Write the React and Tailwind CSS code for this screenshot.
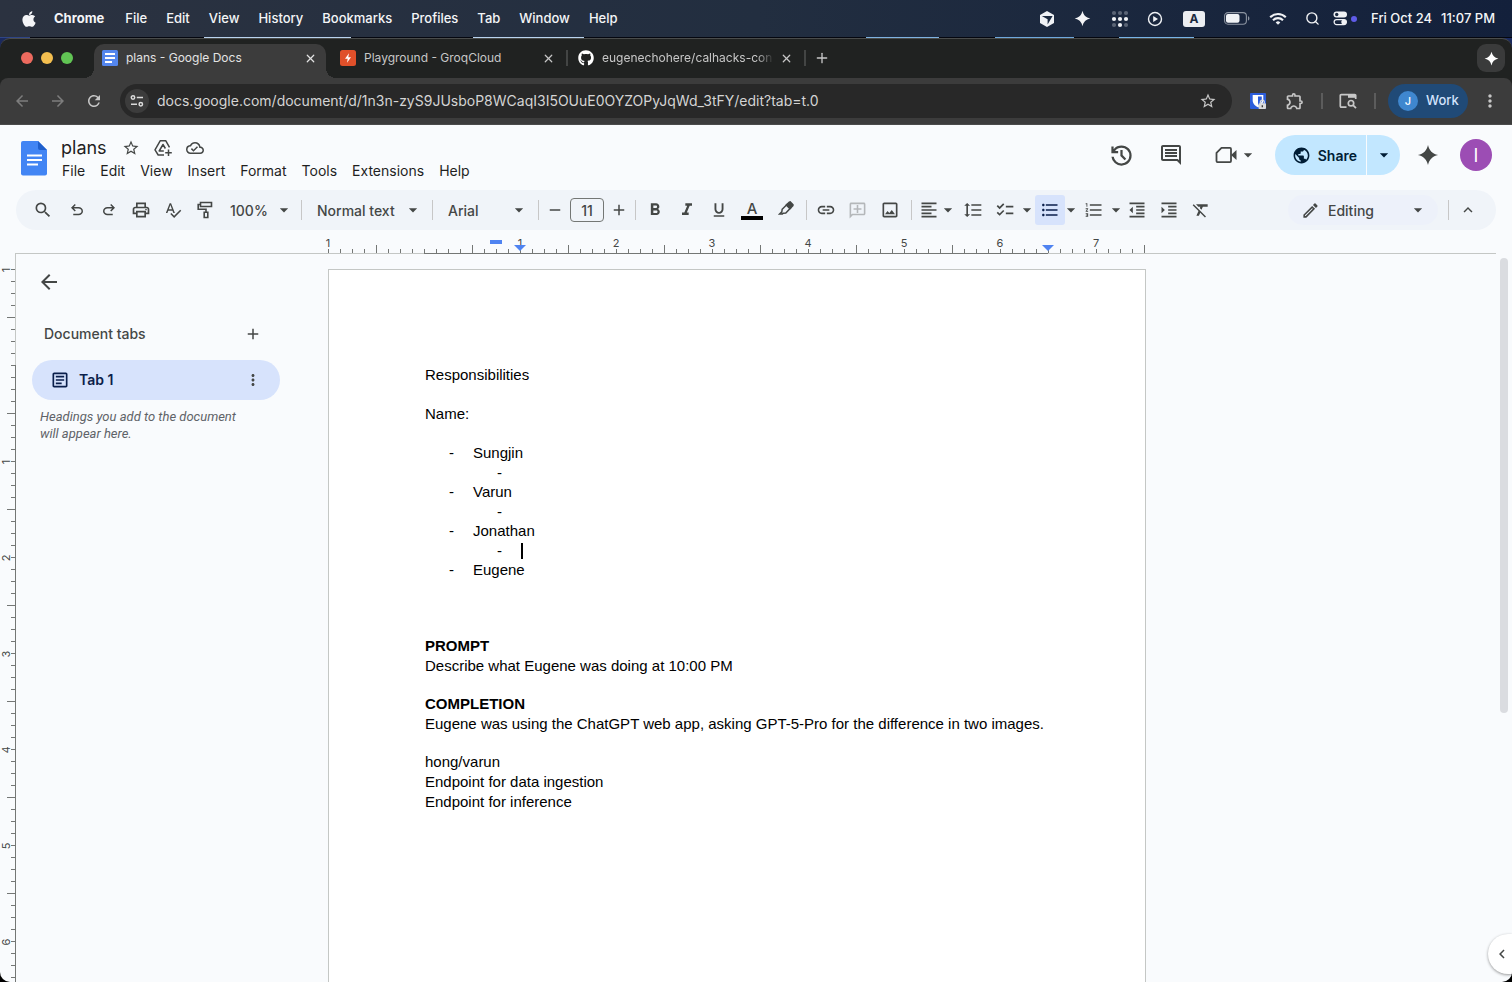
import React from "react";
import {
  MdSearch, MdOutlinePrint, MdSpellcheck, MdArrowDropDown, MdRemove, MdAdd,
  MdFormatBold, MdFormatItalic, MdFormatUnderlined, MdLink, MdOutlineAddComment, MdOutlineImage,
  MdFormatAlignLeft, MdFormatLineSpacing, MdChecklist, MdFormatListBulleted, MdFormatListNumbered,
  MdFormatIndentDecrease, MdFormatIndentIncrease, MdFormatClear, MdOutlineModeEdit, MdKeyboardArrowUp,
  MdStarBorder, MdOutlineCloudDone, MdOutlineComment, MdPublic,
  MdArrowBack, MdArrowForward, MdRefresh, MdMoreVert, MdOutlineArticle, MdChevronLeft, MdOutlineExtension,
} from "react-icons/md";
import { FaApple, FaGithub } from "react-icons/fa";
import { X, Plus, Search } from "lucide-react";

const Symbol = ({ d, size = 20, className = "" }) => (
  <svg viewBox="0 -960 960 960" width={size} height={size} fill="currentColor" className={className}><path d={d} /></svg>
);

const UNDO = "M280-200v-80h284q63 0 109.5-40T720-420q0-60-46.5-100T564-560H312l104 104-56 56-200-200 200-200 56 56-104 104h252q97 0 166.5 63T800-420q0 94-69.5 157T564-200H280Z";
const REDO = "M396-200q-97 0-166.5-63T160-420q0-94 69.5-157T396-640h252L544-744l56-56 200 200-200 200-56-56 104-104H396q-63 0-109.5 40T240-420q0 60 46.5 100T396-280h284v80H396Z";
const HISTORY = "M480-120q-138 0-240.5-91.5T122-440h82q14 104 92.5 172T480-200q117 0 198.5-81.5T760-480q0-117-81.5-198.5T480-760q-69 0-129 32t-101 88h110v80H120v-240h80v94q51-64 124.5-99T480-840q75 0 140.5 28.5t114 77q48.5 48.5 77 114T840-480q0 75-28.5 140.5t-77 114q-48.5 48.5-114 77T480-120Zm112-192L440-464v-216h80v184l128 128-56 56Z";

const Spark = ({ size = 20, className = "" }) => (
  <svg viewBox="0 0 24 24" width={size} height={size} fill="currentColor" className={className}>
    <path d="M12 1C13.4 7.200 16.800 10.600 23 12C16.800 13.400 13.400 16.800 12 23C10.600 16.800 7.200 13.400 1 12C7.200 10.600 10.600 7.200 12 1Z" />
  </svg>
);

const DriveAdd = () => (
  <svg viewBox="0 0 20 20" width="20" height="20" fill="none" stroke="currentColor" strokeWidth="1.500" strokeLinejoin="round">
    <path d="M11 17H5.200L2 11.800 7.300 2.700h5.400l3.800 6.600" />
    <path d="M10.800 13H6.200L10 6.500l2.400 4" />
    <path d="M15.500 11.500v6.500M12.200 14.800h6.600" />
  </svg>
);

const PaintRoller = () => (
  <svg viewBox="0 0 20 20" width="20" height="20" fill="none" stroke="currentColor" strokeWidth="1.600">
    <path d="M5.500 2.500h11v4h-11zM5.500 4.500H3.200v4.700h7.800v3M9.200 12.200h3.600v5.300H9.200z" />
  </svg>
);

const Highlighter = () => (
  <svg viewBox="0 0 20 20" width="20" height="20" fill="none" stroke="currentColor" strokeWidth="1.500">
    <path d="M6.200 9.200l5-5 3.600 3.600-5 5.200-2.700.2-.8.900H3.600l2.200-2.200z" />
    <path d="M10.300 5.100l3-3 .9-.2 2.800 2.800-.1.900-3 3z" fill="currentColor" />
  </svg>
);

const VideoCam = () => (
  <svg viewBox="0 0 24 24" width="24" height="24">
    <path d="M7.500 4.900H16a1 1 0 0 1 1 1v12.200a1 1 0 0 1-1 1H3.500a1 1 0 0 1-1-1V9.900z" fill="none" stroke="currentColor" strokeWidth="1.800" strokeLinejoin="round" />
    <path d="M17 12l5.500-5v10z" fill="currentColor" />
  </svg>
);

const DocsFavicon = () => (
  <svg viewBox="0 0 16 16" width="16" height="16" className="shrink-0">
    <rect width="16" height="16" rx="1.500" fill="#5486ee" />
    <path d="M3 4h10M3 8h10M3 12h7" stroke="#fff" strokeWidth="1.800" />
  </svg>
);

const GroqFavicon = () => (
  <svg viewBox="0 0 16 16" width="16" height="16" className="shrink-0">
    <rect width="16" height="16" rx="2.500" fill="#e0502a" />
    <path d="M9 3.300L5 8.800h2.700L7 12.700l4-5.500H8.300z" fill="#fff" />
  </svg>
);

const DocsLogo = () => (
  <svg viewBox="0 0 26 35" width="26" height="35" className="shrink-0">
    <path d="M2 0h15l9 9v23.500a2 2 0 0 1-2 2H2a2 2 0 0 1-2-2V2a2 2 0 0 1 2-2z" fill="#4285f4" />
    <path d="M17 0l9 9h-7a2 2 0 0 1-2-2z" fill="#1f5fcc" />
    <path d="M6 14.500h15M6 19h15M6 23.500h11" stroke="#fff" strokeWidth="1.800" />
  </svg>
);

const CubeIcon = () => (
  <svg viewBox="0 0 16 18" width="16" height="18">
    <path d="M8 1l7 4v8l-7 4-7-4V5z" fill="#f0f2f5" />
    <path d="M2.800 6h10.800L8.600 14.500V9.300z" fill="#1c2a40" />
  </svg>
);

const DotsIcon = () => (
  <svg viewBox="0 0 18 18" width="18" height="18" fill="#f0f2f5">
    {[[3, 3, .3], [9, 3, .3], [15, 3, .3], [3, 9, 1], [9, 9, 1], [15, 9, 1], [3, 15, .3], [9, 15, 1], [15, 15, .3]].map(([x, y, o], i) => (
      <circle key={i} cx={x} cy={y} r="2.100" opacity={o} />
    ))}
  </svg>
);

const PlayIcon = () => (
  <svg viewBox="0 0 16 16" width="16" height="16">
    <circle cx="8" cy="8" r="6.500" fill="none" stroke="#f0f2f5" strokeWidth="1.400" />
    <path d="M6.200 5.100L11 8l-4.800 2.900z" fill="#f0f2f5" />
  </svg>
);

const BatteryIcon = () => (
  <svg viewBox="0 0 26 13" width="26" height="13">
    <rect x=".6" y=".6" width="21.800" height="11.600" rx="3.400" fill="none" stroke="#8c94a1" strokeWidth="1.100" />
    <rect x="2" y="2" width="13.500" height="8.800" rx="2" fill="#f0f2f5" />
    <path d="M24 4.300c1 .4 1.400 1.200 1.400 2.100s-.4 1.700-1.400 2.100z" fill="#8c94a1" />
  </svg>
);

const WifiIcon = () => (
  <svg viewBox="0 0 18 14" width="18" height="14" fill="none" stroke="#f0f2f5" strokeWidth="2.100">
    <path d="M1.200 5.200a11 11 0 0 1 15.600 0M4 8.200a7.100 7.100 0 0 1 10 0" />
    <path d="M9 12.800l-2.300-2.400a3.300 3.300 0 0 1 4.600 0z" fill="#f0f2f5" stroke="none" />
  </svg>
);

const ControlIcon = () => (
  <svg viewBox="0 0 15 15" width="15" height="15">
    <rect x=".5" y=".5" width="13.500" height="6" rx="3" fill="#f0f2f5" />
    <circle cx="3.700" cy="3.500" r="1.700" fill="#1c2a40" />
    <rect x="1.100" y="8.600" width="12.300" height="5" rx="2.500" fill="none" stroke="#f0f2f5" strokeWidth="1.200" />
    <circle cx="10.800" cy="11.100" r="2.500" fill="#f0f2f5" />
  </svg>
);

const TuneIcon = () => (
  <svg viewBox="0 0 14 14" width="14" height="14" fill="none" stroke="#dcdcdc" strokeWidth="1.500">
    <circle cx="3" cy="3.500" r="1.700" /><path d="M6.800 3.500H13M1 10.200h6" /><circle cx="10.800" cy="10.200" r="1.700" />
  </svg>
);

const ShieldIcon = () => (
  <svg viewBox="0 0 16 16" width="16" height="16">
    <rect width="16" height="16" rx="1" fill="#2c5ddb" />
    <path d="M2.700 2h10.600v5.500c0 3.500-2.800 5.600-5.300 6.700C5.500 13 2.700 11 2.700 7.500z" fill="#fff" />
    <path d="M8 3.500h3.800v4c0 2.200-1.800 3.800-3.800 4.800z" fill="#2c5ddb" />
    <rect x="8.500" y="10.200" width="7.500" height="5.800" rx="1" fill="#dcdcdc" />
    <path d="M10.300 10.500V9.200a2 2 0 0 1 4 0v1.300" fill="none" stroke="#dcdcdc" strokeWidth="1.200" />
    <path d="M12.300 12.200v2" stroke="#333" strokeWidth="1.300" />
  </svg>
);

const TabSearchIcon = () => (
  <svg viewBox="0 0 18 16" width="18" height="16" fill="none" stroke="#c7c7c7" strokeWidth="1.700">
    <path d="M7.500 14.100H2.300a1 1 0 0 1-1-1V2.600a1 1 0 0 1 1-1h13.400a1 1 0 0 1 1 1V6" />
    <path d="M9 1.500h7.500v3.300H9z" fill="#c7c7c7" stroke="none" />
    <circle cx="12" cy="10.200" r="2.700" /><path d="M14 12.200l3 3" />
  </svg>
);

function MenuBar() {
  const items = ["File", "Edit", "View", "History", "Bookmarks", "Profiles", "Tab", "Window", "Help"];
  return (
    <header className="flex h-[37px] shrink-0 items-center bg-linear-to-r from-[#2b3240] via-[#222e40] to-[#13203b] pr-[17px] pl-5 text-[13px] font-medium text-[#f4f5f7]">
      <FaApple size={18} className="mr-4" />
      <nav aria-label="Application menu" className="flex items-center gap-[19px]">
        <button className="mr-[2px] font-bold">Chrome</button>
        {items.map((t) => <button key={t}>{t}</button>)}
      </nav>
      <div className="ml-auto flex items-center">
        <span className="mr-[19px]"><CubeIcon /></span>
        <Spark size={17} className="mr-5" />
        <span className="mr-[18px]"><DotsIcon /></span>
        <span className="mr-5"><PlayIcon /></span>
        <span className="mr-[19px] flex h-4 w-[22px] items-center justify-center rounded-[3px] bg-[#eceef1] text-[12px] font-bold text-[#1c2a40]">A</span>
        <span className="mr-[19px]"><BatteryIcon /></span>
        <span className="mr-[18px]"><WifiIcon /></span>
        <Search size={15} strokeWidth={2.200} className="mr-[13px]" />
        <ControlIcon />
        <span className="mr-[14px] ml-[3px] size-[6px] rounded-full bg-[#5f5ce8]" />
        <time className="flex gap-[9px]"><span>Fri Oct 24</span><span>11:07 PM</span></time>
      </div>
    </header>
  );
}

function BrowserTab({ icon, title, active, fade }) {
  return (
    <div className={"relative flex h-[34px] w-[232px] items-center gap-2 px-2 pb-[6px] text-[12px] " + (active ? "rounded-t-[10px] bg-[#3c3c3c] text-[#e3e3e3]" : "text-[#c7c7c7]")}>
      {active && <span className="absolute bottom-0 -left-[10px] size-[10px] bg-[radial-gradient(circle_at_0_0,transparent_10px,#3c3c3c_10px)]" />}
      {active && <span className="absolute -right-[10px] bottom-0 size-[10px] bg-[radial-gradient(circle_at_100%_0,transparent_10px,#3c3c3c_10px)]" />}
      {icon}
      <span className={"min-w-0 flex-1 overflow-hidden whitespace-nowrap " + (fade ? "-mr-1 mask-r-from-90% mask-r-to-100%" : "")}>{title}</span>
      <button aria-label={"Close " + title} className="flex size-4 shrink-0 items-center justify-center"><X size={13} strokeWidth={2.200} /></button>
    </div>
  );
}

const TabDivider = () => (
  <div className="flex h-[34px] w-[6px] items-center justify-center pb-[6px]"><span className="h-4 w-[2px] bg-[#434544]" /></div>
);

function TabStrip() {
  return (
    <div className="flex h-10 items-end rounded-t-[10px] border-t border-[#4a4c4b] bg-[#202221] pr-[7px] pl-[21px]">
      <div className="mr-[21px] flex h-10 items-center gap-2">
        <button aria-label="Close window" className="size-3 rounded-full bg-[#ec6a5e]" />
        <button aria-label="Minimize window" className="size-3 rounded-full bg-[#f4bf4f]" />
        <button aria-label="Zoom window" className="size-3 rounded-full bg-[#61c554]" />
      </div>
      <BrowserTab active icon={<DocsFavicon />} title="plans - Google Docs" />
      <div className="w-[6px]" />
      <BrowserTab icon={<GroqFavicon />} title="Playground - GroqCloud" />
      <TabDivider />
      <BrowserTab fade icon={<FaGithub size={16} className="shrink-0 text-white" />} title="eugenechohere/calhacks-con" />
      <TabDivider />
      <button aria-label="New tab" className="ml-[6px] flex h-[34px] items-center pb-[6px] text-[#c7c7c7]"><Plus size={16} /></button>
      <button aria-label="Assistant" className="mb-[6px] ml-auto flex size-7 items-center justify-center rounded-[9px] bg-[#3a3b3b] text-white"><Spark size={15} /></button>
    </div>
  );
}

function AddressBar() {
  return (
    <div className="bg-[#202221]">
      <div className="flex h-[47px] items-center rounded-t-lg border-b border-[#4b4b4b] bg-[#3c3c3c] pr-3 pl-[13px] text-[#c7c7c7]">
        <button aria-label="Back" className="mr-[18px] text-[#7d7d7d]"><MdArrowBack size={18} /></button>
        <button aria-label="Forward" className="mr-[18px] text-[#7d7d7d]"><MdArrowForward size={18} /></button>
        <button aria-label="Reload" className="mr-[17px]"><MdRefresh size={18} /></button>
        <div className="flex h-[34px] flex-1 items-center rounded-full bg-[#282828] pr-[15px] pl-[5px]">
          <button aria-label="Site information" className="mr-2 flex size-6 items-center justify-center rounded-full bg-[#3c3c3c]"><TuneIcon /></button>
          <div className="flex min-w-0 flex-1">
            <input aria-label="Address" className="w-full bg-transparent text-[14px] leading-5 text-[#d4d4d4] outline-none" defaultValue="docs.google.com/document/d/1n3n-zyS9JUsboP8WCaqI3I5OUuE0OYZOPyJqWd_3tFY/edit?tab=t.0" />
          </div>
          <button aria-label="Bookmark this tab"><MdStarBorder size={18} /></button>
        </div>
        <button aria-label="Password manager" className="ml-[18px]"><ShieldIcon /></button>
        <button aria-label="Extensions" className="ml-[19px]"><MdOutlineExtension size={20} /></button>
        <span className="mr-4 ml-4 h-4 w-[2px] bg-[#5c5c5c]" />
        <button aria-label="Search tabs"><TabSearchIcon /></button>
        <span className="mr-3 ml-[17px] h-4 w-[2px] bg-[#5c5c5c]" />
        <button className="mr-3 flex h-[34px] w-20 items-center gap-2 rounded-full bg-[#204a77] pl-[10px] text-[13px] font-medium text-[#d3e3fd]">
          <span className="flex size-5 items-center justify-center rounded-full bg-[#3f87cf] text-[11px] text-white">J</span>Work
        </button>
        <button aria-label="Browser menu"><MdMoreVert size={20} /></button>
      </div>
    </div>
  );
}

function DocsHeader() {
  const menus = ["File", "Edit", "View", "Insert", "Format", "Tools", "Extensions", "Help"];
  return (
    <div className="flex h-[65px] items-start pr-5 pl-[21px] text-[#444746]">
      <a href="#home" aria-label="Docs home" className="mt-4 mr-[14px]"><DocsLogo /></a>
      <div className="mt-3">
        <div className="flex h-[22px] items-center">
          <input aria-label="Document name" defaultValue="plans" className="mr-[13px] h-[22px] w-[48px] bg-transparent pb-[2px] text-[18px] text-[#1f1f1f] outline-none" />
          <button aria-label="Star" className="mr-[13px]"><MdStarBorder size={18} /></button>
          <button aria-label="Add to Drive" className="mr-[13px]"><DriveAdd /></button>
          <button aria-label="Saved to Drive"><MdOutlineCloudDone size={18} /></button>
        </div>
        <nav aria-label="Document menu" className="flex h-[22px] items-center gap-[15px] pl-px text-[14px] text-[#1f1f1f]">
          {menus.map((m) => <button key={m}>{m}</button>)}
        </nav>
      </div>
      <div className="mt-[10px] ml-auto flex h-10 items-center">
        <button aria-label="Version history" className="mr-6"><Symbol d={HISTORY} size={27} /></button>
        <button aria-label="Comments" className="mr-[31px]"><MdOutlineComment size={24} /></button>
        <button aria-label="Start a call" className="mr-[17px] flex items-center"><VideoCam /><MdArrowDropDown size={20} /></button>
        <div className="mr-[17px] flex h-10 overflow-hidden rounded-full text-[#001d35]">
          <button className="flex items-center gap-[7px] bg-[#c2e7ff] pr-[9px] pl-[17px] text-[14px] font-semibold"><MdPublic size={19} />Share</button>
          <button aria-label="Share options" className="ml-px flex w-[33px] items-center justify-center bg-[#c2e7ff]"><MdArrowDropDown size={20} /></button>
        </div>
        <button aria-label="Ask Gemini" className="mr-[21px]"><Spark size={22} /></button>
        <button aria-label="Account" className="flex size-8 items-center justify-center rounded-full bg-[#9c4db4] text-[18px] text-white">I</button>
      </div>
    </div>
  );
}

const Divider = () => <span className="h-5 w-px shrink-0 bg-[#c7c7c7]" />;

const Tool = ({ label, children, wide = "w-8", className = "" }) => (
  <button aria-label={label} className={"flex h-[30px] shrink-0 items-center justify-center " + wide + " " + className}>{children}</button>
);

const Arrow = ({ label }) => (
  <button aria-label={label} className="flex h-[30px] w-[11px] shrink-0 items-center justify-center"><MdArrowDropDown size={20} className="shrink-0" /></button>
);

const Picker = ({ label, value, options, wide }) => (
  <label className={"relative flex shrink-0 items-center " + wide}>
    <select aria-label={label} defaultValue={value} className="w-full appearance-none bg-transparent text-[14px] font-medium text-[#444746] outline-none">
      {options.map((o) => <option key={o}>{o}</option>)}
    </select>
    <MdArrowDropDown size={20} className="pointer-events-none absolute right-0" />
  </label>
);

function Toolbar() {
  return (
    <div className="mx-4 flex h-10 items-center rounded-full bg-[#f0f4f9] pr-[10px] pl-[10px] text-[#444746]">
      <Tool label="Search the menus" wide="w-[34px]" className="mr-px"><MdSearch size={20} /></Tool>
      <Tool label="Undo"><Symbol d={UNDO} size={18} /></Tool>
      <Tool label="Redo"><Symbol d={REDO} size={18} /></Tool>
      <Tool label="Print"><MdOutlinePrint size={20} /></Tool>
      <Tool label="Spelling"><MdSpellcheck size={18} /></Tool>
      <Tool label="Paint format"><PaintRoller /></Tool>
      <div className="ml-[9px]"><Picker label="Zoom" value="100%" options={["50%", "100%", "150%"]} wide="w-16" /></div>
      <div className="mr-[15px] ml-[7px] flex"><Divider /></div>
      <Picker label="Styles" value="Normal text" options={["Normal text", "Title", "Heading 1"]} wide="w-[106px]" />
      <div className="mr-[15px] ml-[9px] flex"><Divider /></div>
      <Picker label="Font" value="Arial" options={["Arial", "Georgia"]} wide="w-[81px]" />
      <div className="ml-[9px] flex"><Divider /></div>
      <Tool label="Decrease font size" wide="w-[31px]"><MdRemove size={18} /></Tool>
      <input aria-label="Font size" defaultValue="11" className="h-6 w-[34px] rounded-[4px] border border-[#747775] bg-transparent text-center text-[14px] font-medium outline-none" />
      <Tool label="Increase font size" wide="w-[30px]"><MdAdd size={18} /></Tool>
      <div className="mr-[3px] ml-px flex"><Divider /></div>
      <Tool label="Bold"><MdFormatBold size={20} /></Tool>
      <Tool label="Italic"><MdFormatItalic size={20} /></Tool>
      <Tool label="Underline"><MdFormatUnderlined size={18} /></Tool>
      <Tool label="Text color" wide="w-[34px]">
        <span className="flex flex-col items-center"><span className="text-[15px] leading-[15px] font-medium">A</span><span className="h-[4px] w-[22px] bg-black" /></span>
      </Tool>
      <Tool label="Highlight color" wide="w-[34px]"><Highlighter /></Tool>
      <div className="mr-[3px] ml-[3px] flex"><Divider /></div>
      <Tool label="Insert link"><MdLink size={20} /></Tool>
      <Tool label="Add comment" className="-scale-x-100 text-[#b4b7ba]"><MdOutlineAddComment size={19} /></Tool>
      <Tool label="Insert image"><MdOutlineImage size={20} /></Tool>
      <div className="mr-1 ml-[5px] flex"><Divider /></div>
      <Tool label="Align" wide="w-[26px]"><MdFormatAlignLeft size={20} /></Tool>
      <Arrow label="Align options" />
      <Tool label="Line spacing" className="ml-1"><MdFormatLineSpacing size={20} /></Tool>
      <Tool label="Checklist"><MdChecklist size={20} /></Tool>
      <Arrow label="Checklist options" />
      <Tool label="Bulleted list" wide="w-[30px]" className="ml-[3px] rounded-[3px] bg-[#d7e3fc] text-[#0b1f4b]"><MdFormatListBulleted size={20} /></Tool>
      <Arrow label="Bulleted list options" />
      <Tool label="Numbered list" className="ml-[2px]"><MdFormatListNumbered size={20} /></Tool>
      <Arrow label="Numbered list options" />
      <Tool label="Decrease indent"><MdFormatIndentDecrease size={20} /></Tool>
      <Tool label="Increase indent"><MdFormatIndentIncrease size={20} /></Tool>
      <Tool label="Clear formatting"><MdFormatClear size={20} /></Tool>
      <div className="mr-[10px] ml-auto flex h-[30px] w-[150px] items-center gap-2 rounded-full bg-[#edf1fa] pr-[10px] pl-[13px]">
        <MdOutlineModeEdit size={19} />
        <div className="flex-1"><Picker label="Mode" value="Editing" options={["Editing", "Suggesting", "Viewing"]} wide="w-full" /></div>
      </div>
      <Divider />
      <Tool label="Hide the menus" wide="w-[37px]"><MdKeyboardArrowUp size={18} /></Tool>
    </div>
  );
}

const inchLabel = (i) => (i % 8 !== 0 || i === 8 ? "" : String(Math.abs(i / 8 - 1)));

function HorizontalRuler() {
  const ticks = Array.from({ length: 69 }, (_, i) => i);
  return (
    <div className="mr-4 ml-[15px] flex h-6 items-stretch text-[11px] text-[#444746]">
      <span className="w-[313px] shrink-0 border-b border-[#c4c7c5]" />
      {ticks.map((i) => (
        <span key={i} className={"relative flex w-3 shrink-0 items-end border-b " + (i >= 8 && i < 60 ? "border-[#747775]" : "border-[#c4c7c5]")}>
          <span className={"w-px bg-[#747775] " + (i % 8 === 4 ? "h-2" : "h-1")} />
          {inchLabel(i) && <span className="absolute top-[7px] -left-[10px] w-5 text-center leading-3">{inchLabel(i)}</span>}
          {i === 14 && <span className="absolute -left-[6px] top-[10px] h-1 w-3 bg-[#4f83f1]" />}
          {(i === 16 || i === 60) && <span className="absolute top-[15px] -left-[6px] size-0 border-x-6 border-t-6 border-x-transparent border-t-[#4f83f1]" />}
        </span>
      ))}
      <span className="flex-1 border-b border-[#c4c7c5]" />
    </div>
  );
}

function VerticalRuler() {
  const ticks = Array.from({ length: 64 }, (_, i) => i);
  return (
    <div className="flex w-4 shrink-0 flex-col text-[11px] text-[#444746]">
      <span className="h-[15px] shrink-0 border-r border-[#c4c7c5]" />
      {ticks.map((i) => (
        <span key={i} className={"relative flex h-3 shrink-0 justify-end border-r " + (i >= 8 ? "border-[#747775]" : "border-[#c4c7c5]")}>
          <span className={"h-px bg-[#747775] " + (i % 8 === 4 ? "w-2" : "w-1")} />
          {inchLabel(i) && <span className="absolute -top-[5px] left-0 w-3 -rotate-90 text-center leading-3">{inchLabel(i)}</span>}
        </span>
      ))}
    </div>
  );
}

function Outline() {
  return (
    <aside className="w-[312px] shrink-0 pt-[18px] pl-4 text-[#444746]">
      <button aria-label="Close outline" className="ml-[7px] flex size-5 items-center justify-center"><MdArrowBack size={24} className="shrink-0" /></button>
      <div className="mt-8 flex h-5 w-[248px] items-center justify-between pr-[18px] pl-3">
        <h2 className="pb-[2px] text-[14px] font-medium">Document tabs</h2>
        <button aria-label="Add tab"><MdAdd size={18} /></button>
      </div>
      <div className="mt-4 flex h-10 w-[248px] items-center rounded-full bg-[#d7e3fc] pr-[18px] pl-[18px] text-[#0b1f4b]">
        <MdOutlineArticle size={20} className="mr-[9px]" />
        <button className="pb-[2px] text-[14px] font-semibold">Tab 1</button>
        <button aria-label="Tab options" className="ml-auto text-[#444746]"><MdMoreVert size={18} /></button>
      </div>
      <p className="mt-2 w-[224px] pl-2 font-['Roboto',sans-serif] text-[13px] leading-[17px] text-[#5f6368] italic">Headings you add to the document will appear here.</p>
    </aside>
  );
}

function NameItem({ name, sub, caret }) {
  return (
    <li className="leading-5">
      <div className="flex pl-6"><span className="w-6">-</span>{name}</div>
      {sub && (
        <div className="flex items-center pl-[72px] leading-[19px]"><span className="w-6">-</span>{caret && <span className="h-4 w-[2px] bg-black" />}</div>
      )}
    </li>
  );
}

function Page() {
  return (
    <article className="mt-[15px] h-[1056px] w-[818px] shrink-0 border border-[#c4c7c5] bg-white px-24 pt-[95px] font-['Liberation_Sans',Arial,sans-serif] text-[15px] leading-5 text-black">
      <div className="flex flex-col gap-[19px]">
        <p>Responsibilities</p>
        <p>Name:</p>
        <ul>
          <NameItem name="Sungjin" sub />
          <NameItem name="Varun" sub />
          <NameItem name="Jonathan" sub caret />
          <NameItem name="Eugene" />
        </ul>
      </div>
      <div className="mt-14 flex flex-col gap-[18px]">
        <p><b>PROMPT</b><br />Describe what Eugene was doing at 10:00 PM</p>
        <p className="whitespace-nowrap"><b>COMPLETION</b><br />Eugene was using the ChatGPT web app, asking GPT-5-Pro for the difference in two images.</p>
        <p>hong/varun<br />Endpoint for data ingestion<br />Endpoint for inference</p>
      </div>
    </article>
  );
}

export default function App() {
  return (
    <div className="flex h-screen flex-col overflow-hidden bg-black font-['Inter',sans-serif]">
      <MenuBar />
      <div className="h-px shrink-0 bg-[linear-gradient(90deg,#2f4586_0_2%,#05070f_2%_13.5%,#b9d3ee_13.5%_23.2%,#05070f_23.2%_31.3%,#b9d3ee_31.3%_38.6%,#05070f_38.6%_57.3%,#7fb2e0_57.3%_62.1%,#05070f_62.1%_65.8%,#6fa8dc_65.8%_71%,#05070f_71%_74%,#78b4e6_74%_79%,#05070f_79%)]" />
      <div className="flex min-h-0 flex-1 flex-col bg-linear-to-b from-[#1b2a5e] to-black">
        <TabStrip />
        <AddressBar />
        <div className="relative flex min-h-0 flex-1 flex-col overflow-hidden rounded-b-[10px] bg-[#f9fbfd]">
          <DocsHeader />
          <Toolbar />
          <HorizontalRuler />
          <main className="flex min-h-0 flex-1 overflow-hidden">
            <VerticalRuler />
            <Outline />
            <Page />
            <div className="mt-1 mr-1 ml-auto h-[455px] w-2 shrink-0 rounded-full bg-[#dadce0]" />
          </main>
          <button aria-label="Show side panel" className="absolute right-0 bottom-2 flex h-10 w-6 items-center justify-center rounded-l-full bg-white pl-1 text-[#444746] shadow-[0_1px_3px_rgba(0,0,0,0.4)]"><MdChevronLeft size={18} /></button>
        </div>
      </div>
    </div>
  );
}
